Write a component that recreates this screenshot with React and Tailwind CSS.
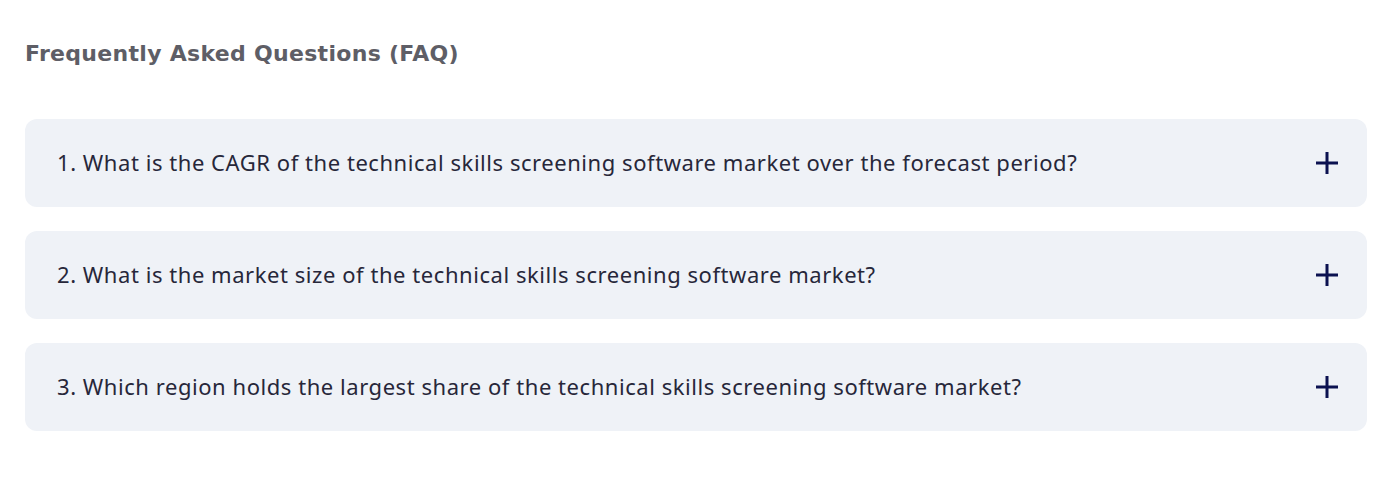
import React from "react";

const questions = [
  "1. What is the CAGR of the technical skills screening software market over the forecast period?",
  "2. What is the market size of the technical skills screening software market?",
  "3. Which region holds the largest share of the technical skills screening software market?",
];

function Plus() {
  return (
    <svg width="22" height="22" viewBox="0 0 22 22" className="shrink-0">
      <path d="M11 0 V22 M0 11 H22" stroke="#0b1150" strokeWidth="3" fill="none" />
    </svg>
  );
}

export default function App() {
  return (
    <div className="w-[1396px] h-[478px] bg-white pl-[25px] pr-[29px] pt-[38px]">
      <h2 className="text-[22px] leading-[32px] font-bold tracking-[0.3px] text-[#5e5e66]" style={{ fontFamily: '"DejaVu Sans", sans-serif' }}>
        Frequently Asked Questions (FAQ)
      </h2>
      <div className="mt-[49px] flex flex-col gap-[24px]">
        {questions.map((q) => (
          <div key={q} className="h-[88px] rounded-[12px] bg-[#eff2f7] flex items-center justify-between pl-[32px] pr-[29px]">
            <span className="text-[22px] leading-[30px] tracking-[0.55px] text-[#27273a] -mt-[2px]" style={{ fontFamily: '"Noto Sans", sans-serif' }}>{q}</span>
            <Plus />
          </div>
        ))}
      </div>
    </div>
  );
}
